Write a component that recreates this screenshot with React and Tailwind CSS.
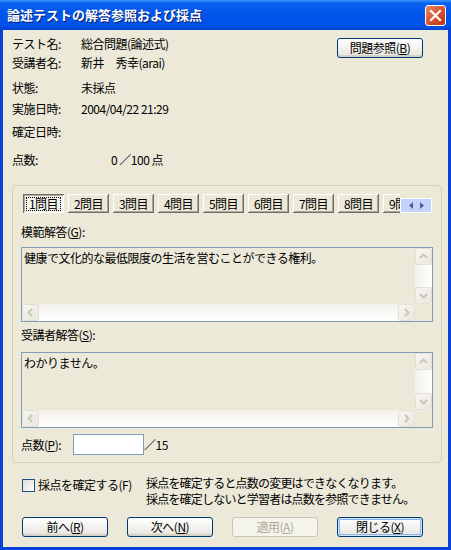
import React from 'react';

const Mn = ({ children }) => <span className="underline">{children}</span>;

const XpButton = ({ children, isDefault, disabled }) => {
    let cls = 'h-[20px] w-[86px] rounded-[3px] border flex items-center justify-center text-[12px] leading-none';
    if (disabled) {
        cls += ' border-[#C9C7BA] bg-[#F5F4EA] text-[#ACA899]';
    } else if (isDefault) {
        cls += ' border-[#003C74] bg-linear-to-b from-white to-[#E6E5DE] text-black shadow-[inset_0_0_0_1px_#CEE3FC,inset_0_0_0_2px_#8FB3EB]';
    } else {
        cls += ' border-[#003C74] bg-linear-to-b from-white to-[#E6E5DE] text-black shadow-[inset_0_-2px_0_#D6D0C5]';
    }
    return <div className={cls}>{children}</div>;
};

const Chevron = ({ dir }) => {
    const paths = {
        up: 'M4 9 L7.5 5.5 L11 9',
        down: 'M4 6 L7.5 9.5 L11 6',
        left: 'M9 4 L5.5 7.5 L9 11',
        right: 'M6 4 L9.5 7.5 L6 11',
    };
    return (
        <div className="w-[17px] h-[17px] rounded-[2px] border border-[#E3E1D6] bg-linear-to-br from-[#F7F6F2] to-[#E9E7DE] flex items-center justify-center">
            <svg width="15" height="15" viewBox="0 0 15 15">
                <path d={paths[dir]} fill="none" stroke="#C9C7BA" strokeWidth="2" />
            </svg>
        </div>
    );
};

const ReadonlyBox = ({ text, height }) => (
    <div className={`ml-[8px] w-[412px] ${height} border border-[#7F9DB9] bg-[#ECE9D8] flex flex-col`}>
        <div className="flex flex-1 min-h-0">
            <div className="flex-1 px-[2px] pt-[2px] text-[12px] leading-[15px]">{text}</div>
            <div className="w-[17px] flex flex-col bg-linear-to-r from-[#F3F1EC] to-white">
                <Chevron dir="up" />
                <div className="flex-1" />
                <Chevron dir="down" />
            </div>
        </div>
        <div className="h-[17px] flex">
            <div className="flex-1 flex bg-linear-to-b from-[#F3F1EC] to-white">
                <Chevron dir="left" />
                <div className="flex-1" />
                <Chevron dir="right" />
            </div>
            <div className="w-[17px] bg-[#ECE9D8]" />
        </div>
    </div>
);

const InfoRow = ({ label, value, h, valueClass = 'w-[69px]' }) => (
    <div className={`flex ${h} text-[12px] leading-[16px]`}>
        <div className={valueClass}>{label}</div>
        <div>{value}</div>
    </div>
);

const questions = ['1問目', '2問目', '3問目', '4問目', '5問目', '6問目', '7問目', '8問目', '9問目'];

export default function App() {
    return (
        <div className="w-[451px] h-[550px] flex flex-col bg-[#0842D6] font-['Noto_Sans_CJK_JP','Liberation_Sans',sans-serif] text-black tracking-[-0.5px]">
            {/* title bar */}
            <div className="h-[30px] flex items-center justify-between pl-[7px] pr-[5px] bg-[linear-gradient(180deg,#3D95FF_0%,#0A60F0_10%,#0055EA_50%,#0052E8_85%,#0042CC_100%)]">
                <div className="text-white font-bold text-[13px] tracking-[0px] [text-shadow:1px_1px_0_#0A1F73]">論述テストの解答参照および採点</div>
                <div className="w-[21px] h-[21px] rounded-[3px] border border-white bg-linear-to-br from-[#E88A6A] via-[#D9532E] to-[#B83414] flex items-center justify-center">
                    <svg width="13" height="13" viewBox="0 0 13 13">
                        <path d="M2 2 L11 11 M11 2 L2 11" stroke="white" strokeWidth="2.2" strokeLinecap="square" />
                    </svg>
                </div>
            </div>

            {/* body */}
            <div className="flex-1 mx-[3px] mb-[3px] bg-[#ECE9D8] flex flex-col">
                <div className="h-[155px] flex justify-between">
                    <div className="ml-[9px] mt-[6px]">
                        <InfoRow label="テスト名:" value="総合問題(論述式)" h="h-[19px]" />
                        <InfoRow label="受講者名:" value="新井　秀幸(arai)" h="h-[25px]" />
                        <InfoRow label="状態:" value="未採点" h="h-[21px]" />
                        <InfoRow label="実施日時:" value="2004/04/22 21:29" h="h-[23px]" />
                        <InfoRow label="確定日時:" value="" h="h-[28px]" />
                        <InfoRow label="点数:" value="0 ／100 点" h="h-[16px]" valueClass="w-[99px]" />
                    </div>
                    <div className="mt-[8px] mr-[25px]">
                        <XpButton>問題参照(<Mn>B</Mn>)</XpButton>
                    </div>
                </div>

                {/* group box */}
                <div className="ml-[9px] w-[430px] h-[278px] border border-[#D0D0BF] rounded-[4px] flex flex-col">
                    <div className="mt-[8px] ml-[10px] flex items-start">
                        <div className="w-[377px] overflow-hidden flex gap-[4px]">
                            {questions.map((q, i) => (
                                <div
                                    key={q}
                                    className={
                                        i === 0
                                            ? 'shrink-0 w-[41px] h-[19px] flex items-center justify-center text-[12px] leading-none bg-[#F4F3EE] shadow-[inset_1px_1px_#716F64,inset_-1px_-1px_#fff,inset_2px_2px_#ACA899]'
                                            : 'shrink-0 w-[41px] h-[19px] flex items-center justify-center text-[12px] leading-none bg-[#ECE9D8] shadow-[inset_-1px_-1px_#716F64,inset_1px_1px_#fff,inset_-2px_-2px_#ACA899]'
                                    }
                                >
                                    {i === 0 ? (
                                        <span className="outline-1 outline-dotted outline-black px-[2px]">{q}</span>
                                    ) : (
                                        q
                                    )}
                                </div>
                            ))}
                        </div>
                        <div className="mt-[4px] w-[32px] h-[15px] bg-[#C3D3FD] border border-white flex items-center justify-center gap-[5px]">
                            <svg width="5" height="7" viewBox="0 0 5 7"><path d="M4 0 L0 3.5 L4 7 Z" fill="#4D6185" /></svg>
                            <svg width="5" height="7" viewBox="0 0 5 7"><path d="M1 0 L5 3.5 L1 7 Z" fill="#4D6185" /></svg>
                        </div>
                    </div>

                    <div className="mt-[11px] ml-[8px] text-[12px] leading-[16px]">模範解答(<Mn>G</Mn>):</div>
                    <div className="mt-[7px]">
                        <ReadonlyBox text="健康で文化的な最低限度の生活を営むことができる権利。" height="h-[75px]" />
                    </div>

                    <div className="mt-[5px] ml-[8px] text-[12px] leading-[16px]">受講者解答(<Mn>S</Mn>):</div>
                    <div className="mt-[9px]">
                        <ReadonlyBox text="わかりません。" height="h-[76px]" />
                    </div>

                    <div className="mt-[6px] ml-[8px] flex items-center text-[12px] leading-[16px]">
                        <div className="w-[52px]">点数(<Mn>P</Mn>):</div>
                        <div className="w-[71px] h-[21px] border border-[#7F9DB9] bg-white" />
                        <div>／15</div>
                    </div>
                </div>

                {/* confirm */}
                <div className="mt-[12px] ml-[19px] flex items-start text-[12px] leading-[16px]">
                    <div className="w-[124px] flex items-center mt-[2px]">
                        <div className="w-[13px] h-[13px] border border-[#1C5180] bg-linear-to-br from-[#DCDBD5] to-white" />
                        <div className="ml-[3px]">採点を確定する(F)</div>
                    </div>
                    <div className="tracking-[-0.8px]">
                        <div>採点を確定すると点数の変更はできなくなります。</div>
                        <div>採点を確定しないと学習者は点数を参照できません。</div>
                    </div>
                </div>

                <div className="mt-[10px] ml-[19px] flex gap-[19px]">
                    <XpButton>前へ(<Mn>R</Mn>)</XpButton>
                    <XpButton>次へ(<Mn>N</Mn>)</XpButton>
                    <XpButton disabled>適用(<Mn>A</Mn>)</XpButton>
                    <XpButton isDefault>閉じる(<Mn>X</Mn>)</XpButton>
                </div>
            </div>
        </div>
    );
}
